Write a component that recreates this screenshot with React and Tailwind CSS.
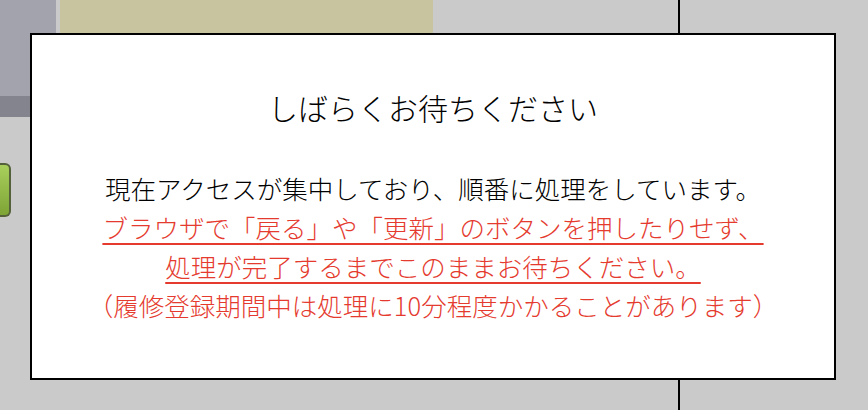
import React from "react";

export default function App() {
  return (
    <div
      className="relative w-[868px] h-[410px] overflow-hidden bg-[#cacaca]"
      style={{ fontFamily: '"Noto Sans CJK JP", "Noto Sans", sans-serif' }}
    >
      {/* background page */}
      <div className="flex h-full">
        <div className="flex flex-col w-[56px]">
          <div className="h-[96px] bg-[#a3a3ae]" />
          <div className="h-[21px] bg-[#84848f]" />
          <div className="mt-[46px] h-[54px] w-[11px] rounded-r-[6px] border-2 border-l-0 border-[#55613a] bg-gradient-to-b from-[#a9cf5c] to-[#7ea436]" />
        </div>
        <div className="ml-[4px] w-[373px] h-[33px] bg-[#c8c4a0]" />
        <div className="ml-[245px] w-[2px] h-full bg-black" />
      </div>

      {/* modal */}
      <div className="absolute left-[30px] top-[33px] w-[806px] h-[347px] border-2 border-black bg-white font-light">
        <div className="pt-[52px] text-center">
          <div className="text-[30px] leading-[40px] text-black">しばらくお待ちください</div>
          <div className="mt-[41px] text-[25.5px] leading-[39px]">
            <div className="text-black">現在アクセスが集中しており、順番に処理をしています。</div>
            <div className="text-[#e53a2e]">
              <span className="underline decoration-2 underline-offset-[5px]">ブラウザで「戻る」や「更新」のボタンを押したりせず、</span>
            </div>
            <div className="text-[#e53a2e]">
              <span className="underline decoration-2 underline-offset-[5px]">処理が完了するまでこのままお待ちください。</span>
            </div>
            <div className="text-[#e53a2e]">（履修登録期間中は処理に10分程度かかることがあります）</div>
          </div>
        </div>
      </div>
    </div>
  );
}
